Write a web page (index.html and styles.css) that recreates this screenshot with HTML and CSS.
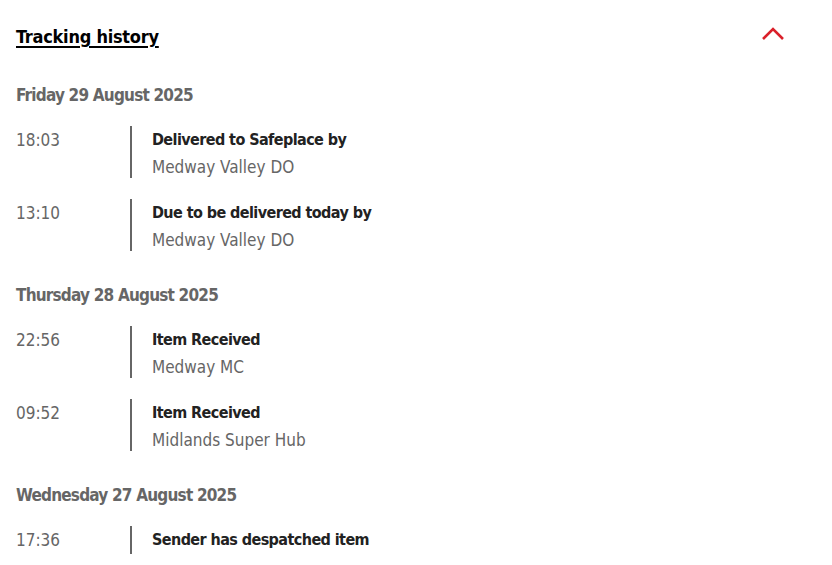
FILE: index.html
```html
<!DOCTYPE html>
<html lang="en">
<head>
<meta charset="utf-8">
<title>Tracking history</title>
<link rel="stylesheet" href="styles.css">
</head>
<body>
<section class="history">
  <div class="history-head">
    <h2 class="history-title">Tracking history</h2>
    <button class="toggle" aria-label="Collapse">
      <svg width="24" height="14" viewBox="0 0 24 14"><path d="M2 12 L12 2 L22 12" fill="none" stroke="#da202a" stroke-width="2.6"/></svg>
    </button>
  </div>

  <h3 class="day">Friday 29 August 2025</h3>
  <div class="event">
    <div class="time">18:03</div>
    <div class="detail">
      <div class="status">Delivered to Safeplace by</div>
      <div class="place">Medway Valley DO</div>
    </div>
  </div>
  <div class="event">
    <div class="time">13:10</div>
    <div class="detail">
      <div class="status">Due to be delivered today by</div>
      <div class="place">Medway Valley DO</div>
    </div>
  </div>

  <h3 class="day">Thursday 28 August 2025</h3>
  <div class="event">
    <div class="time">22:56</div>
    <div class="detail">
      <div class="status">Item Received</div>
      <div class="place">Medway MC</div>
    </div>
  </div>
  <div class="event">
    <div class="time">09:52</div>
    <div class="detail">
      <div class="status">Item Received</div>
      <div class="place">Midlands Super Hub</div>
    </div>
  </div>

  <h3 class="day">Wednesday 27 August 2025</h3>
  <div class="event">
    <div class="time">17:36</div>
    <div class="detail">
      <div class="status">Sender has despatched item</div>
    </div>
  </div>
</section>
</body>
</html>
```
FILE: styles.css
```css
html, body {
  margin: 0;
  padding: 0;
  background: #ffffff;
}
body {
  font-family: "DejaVu Sans Condensed", "DejaVu Sans", sans-serif;
  color: #222222;
}
.history {
  padding: 22px 16px 0 16px;
}
.history-head {
  display: flex;
  justify-content: space-between;
  align-items: flex-start;
  padding-right: 31px;
}
.history-title {
  margin: 0;
  font-size: 18px;
  line-height: 30px;
  font-weight: bold;
  letter-spacing: -0.25px;
  color: #000000;
  text-decoration: underline;
  text-decoration-thickness: 2px;
  text-underline-offset: 3px;
}
.toggle {
  border: 0;
  background: none;
  padding: 0;
  margin-top: 5px;
  width: 24px;
  height: 14px;
  display: flex;
}
.day {
  margin: 30px 0 18px 0;
  font-size: 17px;
  line-height: 26px;
  font-weight: bold;
  letter-spacing: -0.8px;
  color: #666666;
}
.event {
  display: flex;
  margin-bottom: 21px;
}
.event:last-child {
  margin-bottom: 0;
}
.event + .day {
  margin-top: 31px;
}
.time {
  width: 114px;
  flex: none;
  font-size: 17px;
  line-height: 28px;
  color: #666666;
}
.detail {
  border-left: 2px solid #666666;
  padding-left: 20px;
}
.status {
  font-size: 16px;
  line-height: 28px;
  font-weight: bold;
  letter-spacing: -0.58px;
  color: #222222;
}
.place {
  font-size: 17px;
  line-height: 21px;
  margin-top: 3px;
  color: #666666;
}
```
